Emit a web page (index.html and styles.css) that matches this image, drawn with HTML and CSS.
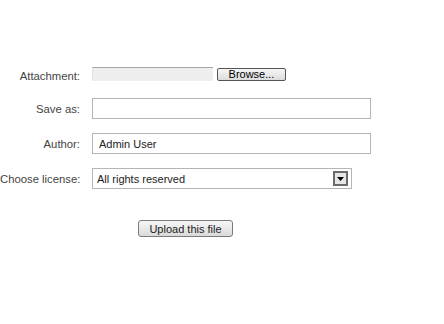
FILE: index.html
```html
<!DOCTYPE html>
<html>
    <head>
        <title>Upload file</title>
        <link rel="stylesheet" href="styles.css">
    </head>
    <body>
        <form class="upload-form" action="#" method="post">
            <label class="field-label">Attachment:</label>
            <div class="file-row">
                <span class="file-path"></span>
                <button type="button" class="browse-btn">Browse...</button>
            </div>

            <label class="field-label" for="saveas">Save as:</label>
            <input class="text-input" id="saveas" name="saveas" type="text">

            <label class="field-label" for="author">Author:</label>
            <input class="text-input" id="author" name="author" type="text" value="Admin User">

            <label class="field-label" for="license">Choose license:</label>
            <div class="select-box">
                <select id="license" name="license">
                    <option>All rights reserved</option>
                </select>
                <span class="select-arrow">
                    <svg width="7" height="4" viewBox="0 0 7 4"><path d="M0 0H7L3.5 4Z" fill="#000"/></svg>
                </span>
            </div>

            <span></span>
            <div class="submit-row">
                <button type="submit" class="upload-btn">Upload this file</button>
            </div>
        </form>
    </body>
</html>
```
FILE: styles.css
```css
body {
    margin: 0;
    font-family: 'Liberation Sans', Arial, sans-serif;
    font-size: 11px;
    color: #333;
    background-color: #fff;
}

.upload-form {
    display: grid;
    grid-template-columns: 80px 279px;
    column-gap: 12px;
    row-gap: 14px;
    align-items: center;
    padding-top: 67px;
}
.field-label {
    text-align: right;
    font-size: 11.3px;
    color: #444;
    white-space: nowrap;
}

.file-row {
    display: flex;
    align-items: center;
    gap: 4px;
    height: 14px;
    margin-bottom: 3px;
}
.file-path {
    display: block;
    width: 120px;
    height: 13px;
    background-color: #eeeeee;
    border-top: 1px solid #a8a8a8;
    border-left: 1px solid #e2e2e2;
}
.browse-btn {
    width: 69px;
    height: 13px;
    padding: 0;
    font-family: inherit;
    font-size: 11px;
    line-height: 11px;
    color: #000;
    border: 1px solid #555;
    border-radius: 2px;
    background: linear-gradient(#f6f6f6, #dcdcdc);
}

.text-input {
    box-sizing: border-box;
    width: 279px;
    height: 21px;
    padding: 0 6px;
    font-family: inherit;
    font-size: 11px;
    color: #222;
    border: 1px solid #b5b5b5;
    outline: none;
}

.select-box {
    box-sizing: border-box;
    display: flex;
    align-items: center;
    width: 260px;
    height: 21px;
    border: 1px solid #b5b5b5;
}
.select-box select {
    flex: 1;
    appearance: none;
    border: none;
    outline: none;
    background: transparent;
    padding: 0 0 0 4px;
    font-family: inherit;
    font-size: 11px;
    color: #222;
}
.select-arrow {
    box-sizing: border-box;
    display: flex;
    align-items: center;
    justify-content: center;
    width: 15px;
    height: 15px;
    margin-right: 3px;
    border: 2px solid #6b6b6b;
    background-color: #e6e6e6;
}

.submit-row {
    margin-top: 17px;
    padding-left: 46px;
}
.upload-btn {
    width: 95px;
    height: 17px;
    padding: 0;
    font-family: inherit;
    font-size: 11px;
    color: #222;
    border: 1px solid #7a7a7a;
    border-radius: 3px;
    background: linear-gradient(#f7f7f7, #dadada);
}
```
